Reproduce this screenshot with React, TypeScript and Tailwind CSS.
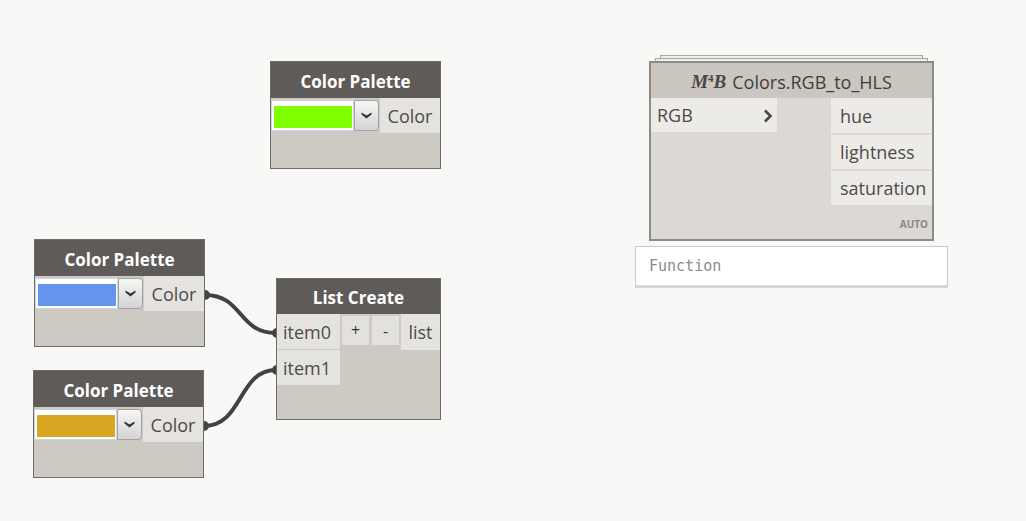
import type { ReactNode } from 'react';

// 下拉箭头
function Chevron() {
  return (
    <svg width="11" height="7" viewBox="0 0 11 7">
      <path d="M0.5 0.5 L5.5 3.6 L10.5 0.5 L10.5 2.6 L5.5 6.4 L0.5 2.6 Z" fill="#333" />
    </svg>
  );
}

function ColorPalette({ pos, swatch }: { pos: string; swatch: string }) {
  return (
    <div className={`absolute flex w-[171px] h-[108px] flex-col border border-[#6f6c68] bg-[#cdc9c3] ${pos}`}>
      <div className="flex h-[36px] items-center justify-center bg-[#5e5b58] pt-[3px] text-[17px] font-bold text-white">
        Color Palette
      </div>
      <div className="flex h-[35px]">
        <div className="flex items-center">
          <div className="flex h-[31px] w-[83px] items-center border border-[#c9d6e6] bg-white pl-[2px] pt-[2px]">
            <div className={`h-[22px] w-[78px] ${swatch}`} />
          </div>
          <div className="flex h-[31px] w-[25px] items-center justify-center rounded-r-[4px] border border-[#a3a3a3] bg-gradient-to-b from-[#f6f6f6] to-[#d4d4d4]">
            <Chevron />
          </div>
        </div>
        <div className="ml-auto flex w-[60px] items-center justify-center bg-[#e5e3df] pt-[1px] text-[18px] text-[#4d4b49]">
          Color
        </div>
      </div>
    </div>
  );
}

function PortBox({ children, className }: { children: ReactNode; className: string }) {
  return <div className={`flex items-center pt-[1px] text-[18px] text-[#4d4b49] ${className}`}>{children}</div>;
}

function ListCreate() {
  return (
    <div className="absolute left-[276px] top-[278px] flex h-[142px] w-[165px] flex-col border border-[#6f6c68] bg-[#cdc9c3]">
      <div className="flex h-[35px] items-center justify-center bg-[#5e5b58] pt-[3px] text-[17px] font-bold text-white">
        List Create
      </div>
      <div className="flex">
        <div className="flex w-[63px] flex-col gap-px">
          <PortBox className="h-[35px] bg-[#e5e3df] pl-[6px]">item0</PortBox>
          <PortBox className="h-[35px] bg-[#e5e3df] pl-[6px]">item1</PortBox>
        </div>
        <div className="ml-[2px] mt-[2px] flex gap-[3px]">
          <div className="flex h-[29px] w-[27px] items-start justify-center bg-[#e3e1dd] pt-[2px] text-[16px] text-[#333]">+</div>
          <div className="flex h-[29px] w-[27px] items-start justify-center bg-[#e3e1dd] pt-[3px] text-[16px] text-[#333]">-</div>
        </div>
        <PortBox className="ml-[2px] h-[36px] w-[39px] justify-center bg-[#e5e3df]">list</PortBox>
      </div>
    </div>
  );
}

function RgbToHls() {
  return (
    <>
      {/* 叠层边框 */}
      <div className="absolute left-[660px] top-[55px] h-[12px] w-[263px] border border-[#a8a6a3] bg-[#efeeec]" />
      <div className="absolute left-[655px] top-[58px] h-[12px] w-[273px] border border-[#a8a6a3] bg-[#efeeec]" />
      <div className="absolute left-[649px] top-[61px] flex h-[180px] w-[285px] flex-col border-2 border-[#8e8b87] bg-[#dcd9d4]">
        <div className="flex h-[35px] items-center justify-center bg-[#cbc7c0] pt-[3px] text-[18px] text-[#3f3d3b]">
          <span className="mr-[6px] font-['Liberation_Serif',serif] text-[19px] font-bold italic text-[#4a4744]">
            M<sup className="text-[11px] not-italic">4</sup>B
          </span>
          Colors.RGB_to_HLS
        </div>
        <div className="flex flex-1">
          <PortBox className="h-[34px] w-[126px] justify-between bg-[#edebe8] pl-[6px] pr-[4px]">
            RGB
            <svg width="10" height="14" viewBox="0 0 10 14">
              <path d="M2 1.5 L7.5 7 L2 12.5" fill="none" stroke="#4a4744" strokeWidth="2.6" />
            </svg>
          </PortBox>
          <div className="ml-auto flex flex-col">
            <div className="flex w-[101px] flex-col gap-[2px]">
              <PortBox className="h-[35px] bg-[#edebe8] pl-[9px]">hue</PortBox>
              <PortBox className="h-[34px] bg-[#edebe8] pl-[9px]">lightness</PortBox>
              <PortBox className="h-[34px] bg-[#edebe8] pl-[9px]">saturation</PortBox>
            </div>
            <div className="mt-auto pb-[7px] pr-[4px] text-right font-['Open_Sans',sans-serif] text-[10px] font-bold text-[#8a8784]">
              AUTO
            </div>
          </div>
        </div>
      </div>
      <div className="absolute left-[635px] top-[246px] flex h-[42px] w-[313px] items-center border border-[#c8c8c8] border-b-[3px] border-b-[#d6d6d6] bg-white pl-[13px] font-['DejaVu_Sans_Mono',monospace] text-[15px] text-[#8b8b8b]">
        Function
      </div>
    </>
  );
}

export default function App() {
  return (
    <div className="relative h-[521px] w-[1026px] overflow-hidden bg-[#f8f8f7] font-['Open_Sans',sans-serif]">
      {/* 连线 */}
      <svg className="absolute left-0 top-0" width="1026" height="521">
        <g fill="none" stroke="#444240" strokeWidth="4">
          <path d="M205 295 C243 295 238 333 276 333" />
          <path d="M204 426 C243 426 238 370 276 370" />
        </g>
        <g fill="#444240">
          <circle cx="205" cy="295" r="5" />
          <circle cx="204" cy="426" r="5" />
          <circle cx="277" cy="333" r="5" />
          <circle cx="277" cy="370" r="5" />
        </g>
      </svg>

      <ColorPalette pos="left-[270px] top-[61px]" swatch="bg-[#7fff00]" />
      <ColorPalette pos="left-[34px] top-[239px]" swatch="bg-[#6495ed]" />
      <ColorPalette pos="left-[33px] top-[370px]" swatch="bg-[#daa520]" />
      <ListCreate />
      <RgbToHls />
    </div>
  );
}
